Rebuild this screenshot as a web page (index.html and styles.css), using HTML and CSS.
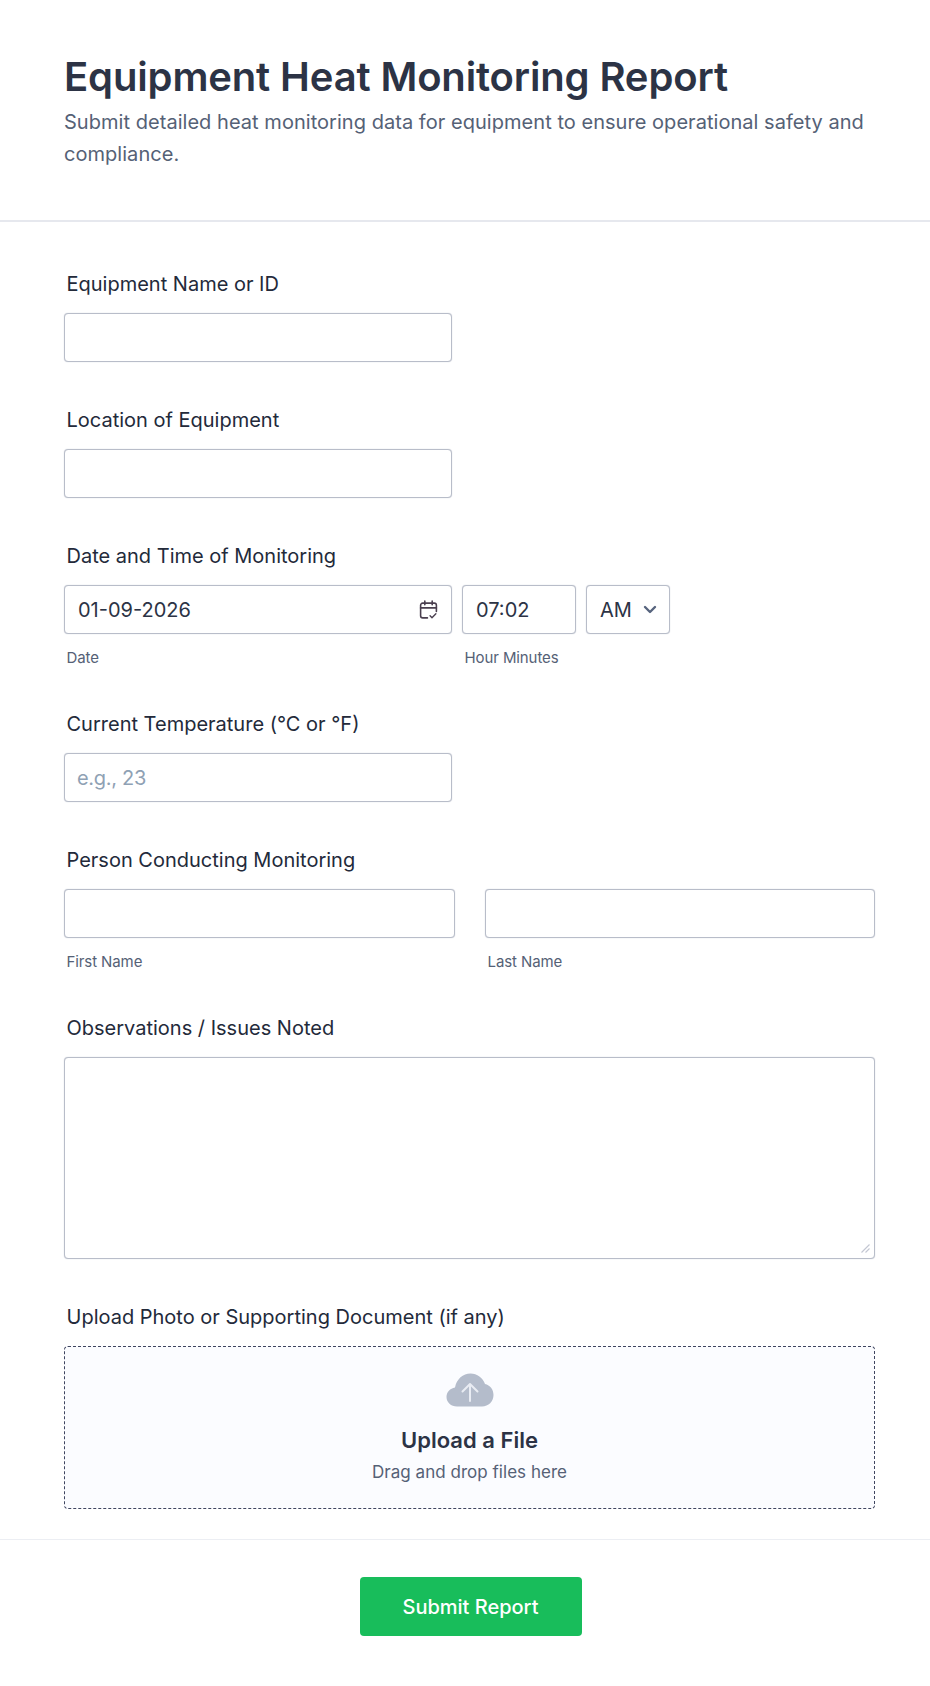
FILE: index.html
```html
<!DOCTYPE html>
<html lang="en">
<head>
    <meta charset="UTF-8">
    <meta name="viewport" content="width=device-width, initial-scale=1.0">
    <title>Equipment Heat Monitoring Report</title>
    <link rel="stylesheet" href="styles.css">
</head>
<body>
    <header class="form-header">
        <h1>Equipment Heat Monitoring Report</h1>
        <p>Submit detailed heat monitoring data for equipment to ensure operational safety and compliance.</p>
    </header>
    <form class="form-body">
        <div class="field">
            <label class="field-label" for="equipment">Equipment Name or ID</label>
            <input class="box box-half" type="text" id="equipment">
        </div>
        <div class="field">
            <label class="field-label" for="location">Location of Equipment</label>
            <input class="box box-half" type="text" id="location">
        </div>
        <div class="field">
            <label class="field-label">Date and Time of Monitoring</label>
            <div class="date-row">
                <div class="date-col">
                    <div class="box box-text box-date">
                        <span>01-09-2026</span>
                        <svg class="icon-calendar" width="19" height="20" viewBox="0 0 18 19" fill="none" stroke="#4a3f4f" stroke-width="1.5" stroke-linecap="round" stroke-linejoin="round">
                            <path d="M8 17H3.500a2 2 0 0 1-2-2V5a2 2 0 0 1 2-2h11a2 2 0 0 1 2 2v6"/>
                            <path d="M1.500 7.500h15M5.500 1v3.500M12.500 1v3.500"/>
                            <path d="M10.500 15l1.800 1.800 3.700-3.800" stroke-width="1.300"/>
                        </svg>
                    </div>
                    <span class="sub-label">Date</span>
                </div>
                <div class="time-col">
                    <div class="box box-text">07:02</div>
                    <span class="sub-label">Hour Minutes</span>
                </div>
                <div class="box box-text box-ampm">
                    <span>AM</span>
                    <svg width="14" height="9" viewBox="0 0 14 9" fill="none" stroke="#57647e" stroke-width="2.400" stroke-linecap="round" stroke-linejoin="round">
                        <path d="M2 2l5 5 5-5"/>
                    </svg>
                </div>
            </div>
        </div>
        <div class="field">
            <label class="field-label" for="temp">Current Temperature (°C or °F)</label>
            <input class="box box-half" type="text" id="temp" placeholder="e.g., 23">
        </div>
        <div class="field">
            <label class="field-label">Person Conducting Monitoring</label>
            <div class="name-row">
                <div>
                    <input class="box box-full" type="text">
                    <span class="sub-label">First Name</span>
                </div>
                <div>
                    <input class="box box-full" type="text">
                    <span class="sub-label">Last Name</span>
                </div>
            </div>
        </div>
        <div class="field">
            <label class="field-label" for="notes">Observations / Issues Noted</label>
            <div class="area-wrap">
                <textarea class="box box-full box-area" id="notes"></textarea>
                <svg class="grip" width="9" height="9" viewBox="0 0 9 9" fill="none" stroke="#c3c7d2" stroke-width="1.100">
                    <path d="M.5 8.500l8-8M4.500 8.500l4-4"/>
                </svg>
            </div>
        </div>
        <div class="field field-upload">
            <label class="field-label">Upload Photo or Supporting Document (if any)</label>
            <div class="upload">
                <svg class="icon-cloud" width="48" height="34" viewBox="0 0 48 34">
                    <path fill="#b4bccb" d="M11 33.500C5 33.500 .5 29.300 .5 24c0-5 3.600-8.800 8.500-9.600C10.500 6.200 17 .5 24.500 .5c6.600 0 12.400 4.200 14.500 10.600 5 1.200 8.500 5.400 8.500 10.900 0 6.500-5 11.500-11.500 11.500z"/>
                    <path fill="none" stroke="#e9ecf3" stroke-width="2" stroke-linecap="round" stroke-linejoin="round" d="M24 28V11M16.500 18.500L24 11l7.500 7.500"/>
                </svg>
                <strong>Upload a File</strong>
                <span>Drag and drop files here</span>
            </div>
        </div>
    </form>
    <footer class="form-footer">
        <button type="button" class="submit">Submit Report</button>
    </footer>
</body>
</html>
```

FILE: styles.css
```css
html, body {
    margin: 0;
    padding: 0;
    background: #fff;
    font-family: Inter, 'Noto Sans', sans-serif;
    color: #2c3345;
}

* {
    box-sizing: border-box;
}

.form-header {
    height: 222px;
    padding: 52px 55px 48px 64px;
    border-bottom: 2px solid #e6e8ee;
}

h1 {
    margin: 0 0 4px;
    font-size: 40px;
    line-height: 50px;
    font-weight: 600;
    letter-spacing: -0.14px;
}

.form-header p {
    margin: 0;
    font-size: 20px;
    line-height: 32px;
    letter-spacing: 0.04px;
    color: #556176;
}

.form-body {
    padding: 50px 55px 0 64px;
}

.field {
    margin-bottom: 46px;
}

.field-upload {
    margin-bottom: 30px;
}

.field-label {
    display: block;
    margin: 0 0 17px 2.5px;
    font-size: 20px;
    line-height: 24px;
    font-weight: 400;
    color: #232a3a;
}

.box {
    display: block;
    height: 49px;
    padding: 0 13px 0 12px;
    border: 1px solid #b8bdc9;
    border-radius: 4px;
    box-shadow: 0 0 1px #b8bdc9;
    background: #fff;
    font-family: inherit;
    font-size: 20px;
    color: #2c3345;
}

input::placeholder {
    color: #8fa1b4;
    letter-spacing: -0.3px;
}

.box-half {
    width: 388px;
}

.box-full {
    width: 100%;
}

.area-wrap {
    position: relative;
}

.box-area {
    height: 202px;
    resize: none;
}

.grip {
    position: absolute;
    right: 5px;
    bottom: 6px;
}

.box-text {
    display: flex;
    align-items: center;
    padding-left: 13px;
}

.box-date {
    justify-content: space-between;
    padding-right: 13px;
}

.icon-calendar {
    flex: none;
}

.date-row {
    display: flex;
    gap: 10px;
}

.date-col {
    width: 388px;
}

.time-col {
    width: 114px;
}

.box-ampm {
    width: 84px;
    justify-content: space-between;
    padding-right: 12px;
}

.sub-label {
    display: block;
    margin: 15px 0 0 2.5px;
    font-size: 15px;
    line-height: 17px;
    letter-spacing: -0.1px;
    color: #556176;
}

.name-row {
    display: grid;
    grid-template-columns: 391px 390px;
    gap: 30px;
}

.upload {
    display: flex;
    flex-direction: column;
    align-items: center;
    height: 163px;
    padding-top: 26px;
    border: 1px dashed #3f4560;
    border-radius: 4px;
    background: #fbfcff;
}

.upload strong {
    margin-top: 19px;
    font-size: 22px;
    line-height: 28px;
    font-weight: 600;
}

.upload span {
    margin-top: 5px;
    font-size: 17px;
    line-height: 26px;
    letter-spacing: 0.03px;
    color: #556176;
}

.form-footer {
    display: flex;
    justify-content: center;
    height: 148px;
    padding: 37px 55px 0 64px;
    border-top: 1px solid #eceef3;
}

.submit {
    width: 222px;
    height: 59px;
    margin-left: 2px;
    border: none;
    border-radius: 4px;
    background: #18bd5b;
    color: #fff;
    font-family: inherit;
    font-size: 20px;
    font-weight: 500;
}
```
